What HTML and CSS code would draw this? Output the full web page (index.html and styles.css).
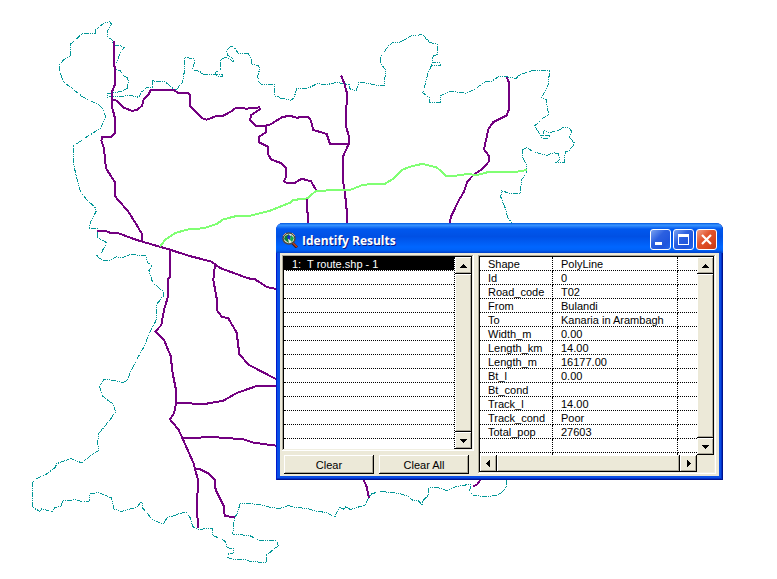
FILE: index.html
```html
<!DOCTYPE html>
<html lang="en">
<head>
<meta charset="utf-8">
<title>Identify Results</title>
<link rel="stylesheet" href="styles.css">
</head>
<body>
<main class="desktop">
  <svg class="map" viewBox="0 0 777 579" role="img" aria-label="Route map">
    <g class="boundary">
      <path transform="translate(20 10) scale(.33333)" d="M233 680V656L209 655L211 637L229 603L224 590L200 570L180 541L169 500L161 462V408L190 387L240 356L257 322L248 295L235 283L190 262L130 215L118 180L120 163L132 148L152 139V102L187 71L226 70L228 58L248 42L268 34L275 43L262 63V80L278 91L280 106L304 108L314 113L302 124L290 157L284 160V178L300 181L308 196L322 203L325 212L321 236L308 243L270 251L263 250V261L290 259L333 257L357 262L365 246L380 233L397 232L398 209L408 216L435 215L450 228L465 240L472 236L487 218L494 180L495 143L520 145L524 152L518 180L540 184L550 195L590 195L608 193L606 201L588 197L586 187L601 178L602 148L618 142L641 156V148L622 135L620 124L630 111L640 109L656 131L685 132L693 142L694 162L716 168L719 178L713 198L716 215L725 224L762 222L764 258L780 262"/>
      <path transform="translate(240 10) scale(.33333)" d="M120 264L152 271L162 264L170 236L205 234L232 221L260 224L290 217L318 222L328 224V236L348 242L356 218L375 219L425 228L433 226L437 180L420 157L422 142L443 110L457 98L480 96L515 77L548 74"/>
      <path transform="translate(410 20) scale(.33333)" d="M38 44L60 68L82 72L84 104L70 106L66 128L88 128L92 138L65 135L54 160L44 200L38 218L58 232L60 248L92 246L93 226L120 214L170 220L186 212L230 184L245 184L265 170L290 170L318 176L330 163L375 150L418 152L416 190L395 232L408 238L416 285L400 293L374 318L392 346H420L418 354L395 355L402 332L420 338L448 330L460 322L478 324L486 336L478 352L494 370L480 390L466 396L463 427L438 428L448 420L446 402L430 398L412 406L370 396L350 382L338 390L336 410L348 432L349 460L334 480L331 522L305 521L275 513L272 530L288 570L292 590L305 608"/>
      <path transform="translate(20 230) scale(.33333)" d="M233 8V22L260 38L243 70L230 78L248 91L270 90L290 80L305 84L330 73L378 78L382 97L397 107L387 122L398 158L430 184V198L409 224L408 272L384 318L375 345L345 398L330 430L322 452L308 458L270 449L252 449L238 468L248 498L262 510"/>
      <path transform="translate(20 400) scale(.33333)" d="M262 0L280 12L287 36L268 62L235 102L233 135L238 150L208 170L186 189L153 176L110 191L106 202L80 222L50 236L37 248L36 300L37 322L60 334L66 326L97 336L104 322L122 320L128 302L150 303L165 298L190 306L208 303L210 282L235 278L275 294L282 328L305 334L350 322L362 307L368 308V324L395 356L428 373L444 350L465 347L480 340L500 337L510 352L518 380L535 388L577 385L578 406L614 422L622 443L642 447L638 462L626 461L623 473L645 479L680 480L690 485L738 487L740 465L775 437L770 420L716 421L690 407L638 402L643 355L652 340L660 312L690 311L720 314L755 323L780 325L805 317"/>
      <path transform="translate(270 465) scale(.33333)" d="M55 122L80 128L110 130L135 138L172 143L185 152L195 155L208 126L220 132L228 125L240 133L250 131L285 120L302 88L328 79L385 85L410 92L430 107L446 108L456 120L460 105L474 92L476 68L500 67L530 77L560 64L600 58L603 66L598 78L608 90L640 95L680 92L700 78L708 68L710 45"/>
    </g>
    <g class="road">
      <path transform="translate(20 10) scale(.33333)" d="M282 94V160L285 178L284 225L276 245V290L285 325V370L275 380L246 382L244 392L252 415L258 475L284 515L286 560L325 605L350 645L366 672V692M276 268L290 272L312 293L335 302L350 301L366 287L372 266L385 254L392 240L460 239L475 249L505 249L511 258V290L545 324L560 329L590 318L610 317L632 305L648 293L680 296L718 292L719 298L692 316L691 332L708 347L740 347"/>
      <path transform="translate(240 10) scale(.33333)" d="M78 346L92 343L125 322L148 317L170 323L205 320L213 333L220 360L260 372L270 402L325 403M78 346V366L56 382V396L84 410V432L94 449L125 460L138 475V502L131 514L140 519L165 518L185 506L213 514L230 543M200 568V600L204 612L205 640M303 196L313 220L321 250L317 345L327 380L326 402L309 440L310 520L315 550L320 600L321 640"/>
      <path transform="translate(410 20) scale(.33333)" d="M290 172L297 188V268L290 286L250 306L235 328L222 388L237 408V424L218 446L190 465L172 485L162 515L147 540L122 592L120 610"/>
      <path transform="translate(20 230) scale(.33333)" d="M232 2L260 4L272 9L296 10L350 30L450 59L505 77L575 95L600 114L685 145L705 148L740 171L768 177M450 59V142L444 148V200L432 240L424 285L406 305L432 330L452 378L458 430L467 475L468 520M468 520L560 521L610 512L650 489L710 468L768 467M585 102L580 150L590 205V240L605 260L625 265L650 308L658 372L685 404L768 447"/>
      <path transform="translate(20 400) scale(.33333)" d="M468 10L462 40L450 58L475 88L487 114L520 188L534 240L531 320L534 385M487 114L535 114L550 111L610 113L670 118L700 128L768 137M525 206L540 208L565 220L584 240L587 270L612 320L614 348L645 352"/>
      <path transform="translate(270 465) scale(.33333)" d="M280 44L290 65L297 100M631 44L622 58L610 64"/>
    </g>
    <g class="road selected-road">
      <path transform="translate(20 10) scale(.33333)" d="M420 710L435 690L465 669L510 657L550 655L590 642L610 628L650 618L690 617"/>
      <path transform="translate(240 10) scale(.33333)" d="M30 617L40 615L90 602L150 578L160 570L203 565L225 545L235 542L330 540L370 524L435 521L460 506L485 480L510 470L550 461"/>
      <path transform="translate(410 20) scale(.33333)" d="M38 432L80 442L108 467L130 468L165 463L205 464L235 456L315 456L352 450"/>
    </g>
  </svg>

  <section class="window" aria-labelledby="window-title">
    <header class="title-bar">
      <svg class="app-icon" viewBox="0 0 16 16" aria-hidden="true">
        <path d="M10 10.500L15 15.500" stroke="#3a1a18" stroke-width="3"/>
        <path d="M10.500 10.500L15 15" stroke="#c04020" stroke-width="1.500"/>
        <ellipse cx="7" cy="6.500" rx="6" ry="5.500" fill="#e4e8dc" stroke="#4c4a44" stroke-width="1.500"/>
        <path d="M3 4L7 2L8 5L6 7L7 11L4 9L2 7Z" fill="#0c7a34"/>
        <path d="M6 3L9 4L8 8L5 6Z" fill="#1030c8"/>
        <path d="M9 3L12 6L10 10L8 8Z" fill="#18a848"/>
        <path d="M1 4L4 1M10 1L13 4" stroke="#c8a080"/>
      </svg>
      <h1 class="title" id="window-title">Identify Results</h1>
      <div class="window-controls">
        <button class="control" type="button" aria-label="Minimize"><svg viewBox="0 0 19 19"><path d="M4 12H11V15H4Z" fill="#fff"/></svg></button>
        <button class="control" type="button" aria-label="Maximize"><svg viewBox="0 0 19 19"><path d="M4 4H15V15H4ZM5 7V14H14V7Z" fill="#fff" fill-rule="evenodd"/></svg></button>
        <button class="control control-close" type="button" aria-label="Close"><svg viewBox="0 0 19 19"><path d="M5 5L14 14M14 5L5 14" stroke="#fff" stroke-width="2.200"/></svg></button>
      </div>
    </header>

    <div class="window-body">
      <div class="results">
        <div class="panel results-panel">
          <ol class="result-list">
            <li class="result result-selected">1:&nbsp; T route.shp - 1</li>
            <li class="result"></li><li class="result"></li><li class="result"></li>
            <li class="result"></li><li class="result"></li><li class="result"></li>
            <li class="result"></li><li class="result"></li><li class="result"></li>
            <li class="result"></li><li class="result"></li><li class="result"></li>
            <li class="result"></li>
          </ol>
          <div class="scrollbar">
            <button class="raised arrow" type="button" aria-label="Scroll results up"><svg viewBox="0 0 8 8"><path d="M0 6H7V5H6V4H5V3H4V2H3V3H2V4H1V5H0Z"/></svg></button>
            <div class="raised thumb"></div>
            <button class="raised arrow" type="button" aria-label="Scroll results down"><svg viewBox="0 0 8 8"><path d="M0 2H7V3H6V4H5V5H4V6H3V5H2V4H1V3H0Z"/></svg></button>
          </div>
        </div>
        <div class="actions">
          <button class="raised action" type="button">Clear</button>
          <button class="raised action" type="button">Clear All</button>
        </div>
      </div>

      <div class="panel details-panel">
        <div class="details-view">
          <table class="details">
            <colgroup><col class="name-column"><col class="value-column"><col></colgroup>
            <tbody>
              <tr><th scope="row">Shape</th><td>PolyLine</td><td></td></tr>
              <tr><th scope="row">Id</th><td>0</td><td></td></tr>
              <tr><th scope="row">Road_code</th><td>T02</td><td></td></tr>
              <tr><th scope="row">From</th><td>Bulandi</td><td></td></tr>
              <tr><th scope="row">To</th><td>Kanaria in Arambagh</td><td></td></tr>
              <tr><th scope="row">Width_m</th><td>0.00</td><td></td></tr>
              <tr><th scope="row">Length_km</th><td>14.00</td><td></td></tr>
              <tr><th scope="row">Length_m</th><td>16177.00</td><td></td></tr>
              <tr><th scope="row">Bt_l</th><td>0.00</td><td></td></tr>
              <tr><th scope="row">Bt_cond</th><td></td><td></td></tr>
              <tr><th scope="row">Track_l</th><td>14.00</td><td></td></tr>
              <tr><th scope="row">Track_cond</th><td>Poor</td><td></td></tr>
              <tr><th scope="row">Total_pop</th><td>27603</td><td></td></tr>
              <tr><td></td><td></td><td></td></tr>
              <tr><td></td><td></td><td></td></tr>
            </tbody>
          </table>
        </div>
        <div class="scrollbar">
          <button class="raised arrow" type="button" aria-label="Scroll details up"><svg viewBox="0 0 8 8"><path d="M0 6H7V5H6V4H5V3H4V2H3V3H2V4H1V5H0Z"/></svg></button>
          <div class="raised thumb"></div>
          <button class="raised arrow" type="button" aria-label="Scroll details down"><svg viewBox="0 0 8 8"><path d="M0 2H7V3H6V4H5V5H4V6H3V5H2V4H1V3H0Z"/></svg></button>
        </div>
        <div class="scrollbar scrollbar-horizontal">
          <button class="raised arrow" type="button" aria-label="Scroll details left"><svg viewBox="0 0 8 8"><path d="M5 0V7H4V6H3V5H2V4H1V3H2V2H3V1H4V0Z"/></svg></button>
          <div class="raised thumb"></div>
          <button class="raised arrow" type="button" aria-label="Scroll details right"><svg viewBox="0 0 8 8"><path d="M2 0V7H3V6H4V5H5V4H6V3H5V2H4V1H3V0Z"/></svg></button>
        </div>
        <div class="corner"></div>
      </div>
    </div>
  </section>
</main>
</body>
</html>
```
FILE: styles.css
```css
:root {
  --face: #ece9d8;
  --shade: #aca899;
}

* {
  box-sizing: border-box;
}

body {
  margin: 0;
  background: #fff;
  color: #000;
  font: 11px/12px "Liberation Sans", sans-serif;
}

button {
  margin: 0;
  padding: 0;
  border: 0;
  color: inherit;
  font: inherit;
}

.desktop {
  position: relative;
}

.map {
  display: block;
  width: 100%;
  height: auto;
  shape-rendering: crispEdges;
}

.map path {
  fill: none;
  vector-effect: non-scaling-stroke;
}

.boundary {
  stroke: #009696;
  stroke-width: 1px;
  stroke-dasharray: 5 1 1 1 1 1;
}

.road {
  stroke: #730080;
  stroke-width: 2px;
  stroke-linejoin: round;
}

.selected-road {
  stroke: #80ff73;
}

/* Window frame */

.window {
  position: absolute;
  top: 223px;
  left: 276px;
  width: 447px;
  padding: 0 4px 4px;
  border-radius: 7px 7px 0 0;
  background: #0a4ee4;
  box-shadow: inset 1px 0 #0019cf, inset -1px -1px #00138c, inset -2px -2px #0030c8;
}

.title-bar {
  display: flex;
  align-items: center;
  height: 30px;
  margin: 0 -4px;
  padding: 3px 6px 0;
  border-radius: 7px 7px 0 0;
  background: linear-gradient(#0058e0, #3a95ff 7%, #0058ee 20%, #0050e4 45%, #0066ff 80%, #0062f8 90%, #0040c8);
}

.app-icon {
  width: 16px;
  height: 16px;
}

.title {
  flex: 1;
  margin: 0 0 0 4px;
  padding-top: 2px;
  color: #fff;
  font: bold 12px/16px "Open Sans", sans-serif;
  text-shadow: 1px 1px #0a1883;
}

.window-controls {
  display: flex;
  gap: 2px;
}

.control {
  width: 21px;
  height: 21px;
  border: 1px solid #fff;
  border-radius: 3px;
  background: linear-gradient(135deg, #7ba2f0, #2c60e0 40%, #1f55dc 75%, #2468ee);
}

.control svg {
  display: block;
}

.control-close {
  background: linear-gradient(135deg, #f0a088, #e2552e 40%, #d8441c 75%, #c03a14);
}

.window-body {
  display: flex;
  gap: 4px;
  padding: 2px 3px 2px 2px;
  background: var(--face);
}

.panel {
  padding: 2px;
  background: #fff;
  box-shadow: inset -1px -1px #fff, inset 1px 1px var(--shade), inset -2px -2px #f1efe2, inset 2px 2px #000;
}

/* Results list */

.results {
  display: flex;
  flex-direction: column;
  gap: 4px;
  width: 192px;
}

.results-panel {
  display: flex;
  height: 196px;
}

.result-list {
  flex: 1;
  margin: 0;
  padding: 0;
  overflow: hidden;
  border-right: 1px dotted #000;
  list-style: none;
}

.result {
  height: 14px;
  padding: 1px 0 0 8px;
  border-bottom: 1px dotted #000;
}

.result-selected {
  background: #000;
  color: #fff;
  border-color: #fff;
}

.actions {
  display: flex;
  gap: 5px;
  padding: 0 5px 0 2px;
}

.action {
  flex: 1;
  height: 19px;
  padding-top: 1px;
}

/* Raised controls */

.raised {
  background: var(--face);
  box-shadow: inset -1px -1px #000, inset 1px 1px #fff, inset -2px -2px var(--shade);
}

.scrollbar {
  display: flex;
  flex-direction: column;
  width: 17px;
}

.scrollbar-horizontal {
  flex-direction: row;
  width: auto;
}

.arrow {
  display: grid;
  place-items: center;
  flex: none;
  width: 17px;
  height: 17px;
}

.arrow svg {
  width: 8px;
  height: 8px;
  shape-rendering: crispEdges;
}

.thumb {
  flex: 1;
}

/* Attribute details */

.details-panel {
  display: grid;
  flex: 1;
  grid-template: 198px 17px / 1fr 17px;
}

.details-view {
  overflow: hidden;
}

.details {
  width: 100%;
  table-layout: fixed;
  border-collapse: separate;
  border-spacing: 0;
}

.name-column {
  width: 73px;
}

.value-column {
  width: 125px;
}

.details th,
.details td {
  height: 14px;
  padding: 1px 0 0 8px;
  border-right: 1px dotted #000;
  border-bottom: 1px dotted #000;
  font-weight: normal;
  text-align: left;
  white-space: nowrap;
}

.details td:last-child {
  padding: 0;
  border-right: 0;
}

.corner {
  background: var(--face);
}
```
